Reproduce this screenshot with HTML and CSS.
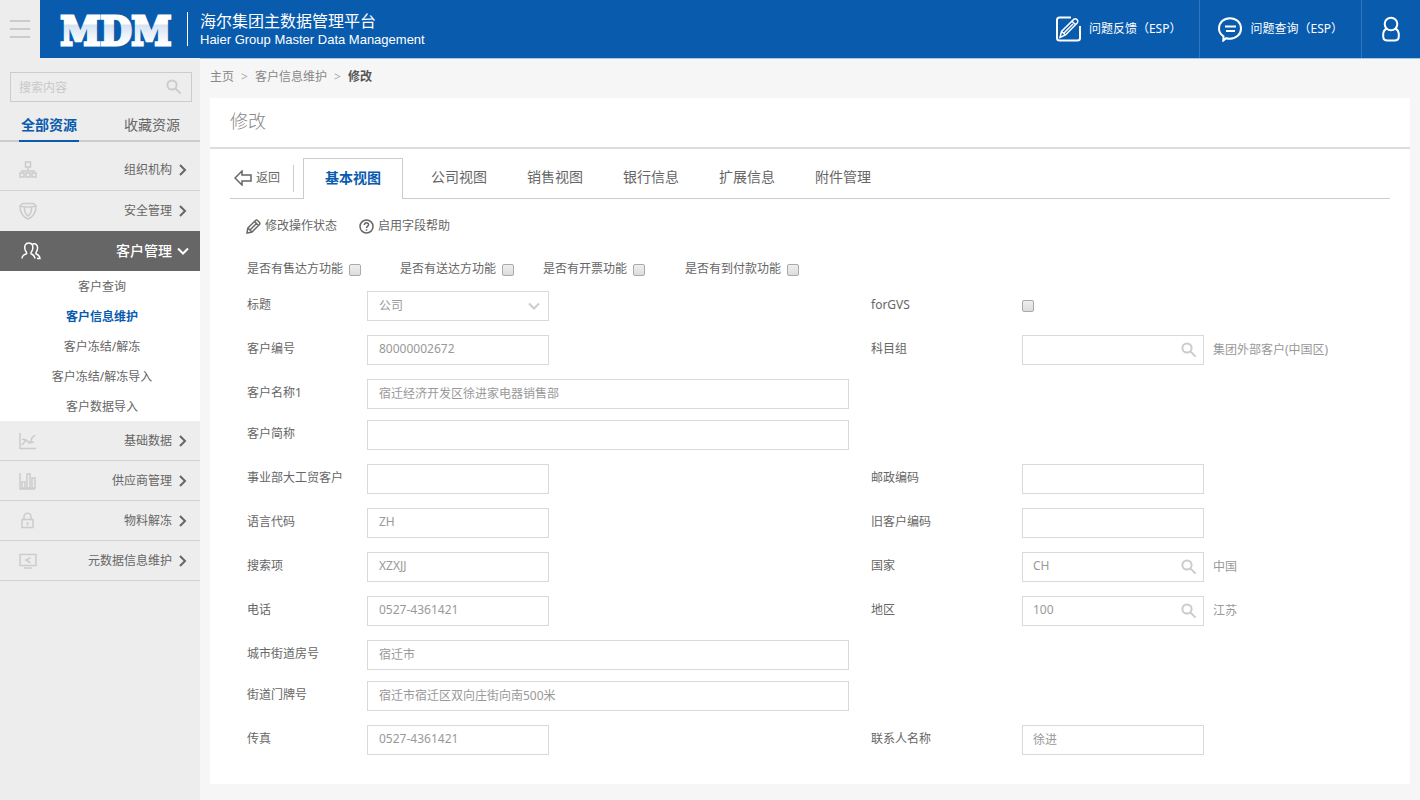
FILE: index.html
```html
<!DOCTYPE html>
<html lang="zh-CN">
<head>
<meta charset="utf-8">
<title>海尔集团主数据管理平台</title>
<link rel="stylesheet" href="styles.css">
</head>
<body>
<svg class="sprite" aria-hidden="true">
  <symbol id="i-search" viewBox="0 0 16 16"><circle cx="6" cy="6" r="4.6"/><path d="M9.6 9.6L14.6 14.6"/></symbol>
  <symbol id="i-right" viewBox="0 0 10 14"><path d="M2 2l5 5-5 5"/></symbol>
  <symbol id="i-down" viewBox="0 0 14 10"><path d="M2 2.500l5 5 5-5"/></symbol>
</svg>
<div class="top">
  <button class="toggle" type="button" aria-label="菜单"><svg width="20" height="20" viewBox="0 0 20 20"><path d="M0 2h20M0 10h20M0 18h20"/></svg></button>
  <header class="header">
    <svg class="logo" width="120" height="56" viewBox="0 0 120 56" role="img" aria-label="MDM">
      <defs><linearGradient id="metal" gradientUnits="userSpaceOnUse" x1="0" y1="10" x2="0" y2="46">
        <stop offset="0" stop-color="#fff"/><stop offset=".37" stop-color="#fff"/><stop offset=".38" stop-color="#d3e2f1"/><stop offset=".9" stop-color="#fff"/><stop offset="1" stop-color="#fff"/>
      </linearGradient></defs>
      <text class="logo-text" x="60" y="44" text-anchor="middle">MDM</text>
    </svg>
    <div class="brand">
      <div class="brand-cn">海尔集团主数据管理平台</div>
      <div class="brand-en">Haier Group Master Data Management</div>
    </div>
    <nav class="links">
      <a class="link" href="#">
        <svg width="26" height="26" viewBox="0 0 26 26"><path d="M16 1.500H4.500Q2 1.500 2 4v18q0 2.500 2.500 2.500h18Q25 24.500 25 22V10"/><path d="M5 21.500l1.500-6L19 3.200q1.500-1 3 .4 1.600 1.600.4 3.200L10.500 19zM6.500 15.500l4 3.500M17 5.200l3.500 3.500M9 17l9-9"/></svg>
        <span>问题反馈（ESP）</span></a>
      <a class="link" href="#">
        <svg width="24" height="26" viewBox="0 0 24 26"><path d="M5.500 20.300C2.700 18.500 1 15.800 1 12.500 1 6.500 5.900 2.200 12 2.200s11 4.300 11 10.300-4.900 10.200-11 10.200c-1.500 0-2.700-.2-3.800-.5L5.300 24.500zM7 10.500h11M8 15h9"/></svg>
        <span>问题查询（ESP）</span></a>
      <a class="user" href="#" aria-label="用户">
        <svg width="18" height="26" viewBox="0 0 18 26"><circle cx="9" cy="8" r="6.300"/><path d="M4.700 12.500C2.200 13.800 1.200 16 1.200 18.500v1.700q0 4.300 4.300 4.300h7q4.300 0 4.300-4.300v-1.700c0-2.500-1-4.700-3.500-6"/></svg>
      </a>
    </nav>
  </header>
</div>
<div class="body">
  <aside class="side">
    <div class="side-search">
      <input type="text" placeholder="搜索内容" aria-label="搜索内容">
      <button class="find" type="button" aria-label="搜索"><svg width="16" height="16"><use href="#i-search"/></svg></button>
    </div>
    <div class="side-tabs">
      <button class="side-tab on" type="button">全部资源</button>
      <button class="side-tab" type="button">收藏资源</button>
    </div>
    <nav>
      <a class="item first" href="#"><svg class="ico" viewBox="0 0 18 18"><path d="M6.500 1h5v5h-5zM9 6v4M3 12v-2h12v2M1 12h4v4H1zM7 12h4v4H7zM13 12h4v4h-4z"/></svg><span>组织机构</span><svg class="arr"><use href="#i-right"/></svg></a>
      <a class="item last" href="#"><svg class="ico" viewBox="0 0 18 18"><path d="M3.500 1.500h11L17 4c0 6-2 10.500-8 13C3 14.500 1 10 1 4zM5.500 5h7c.5 4-1 7-3.500 9-2.500-2-4-5-3.500-9zM1 4l4.500 1M17 4l-4.500 1"/></svg><span>安全管理</span><svg class="arr"><use href="#i-right"/></svg></a>
      <a class="item open" href="#"><svg class="ico people" viewBox="0 0 20 20"><path d="M1 17.500c0-3 1.500-3.800 4.500-4.700C6.300 12 5 10.800 4.200 9 3 5 4.300 2 7.800 2s4.800 3 3.600 7c-.8 1.800-2.100 3-1.300 3.800 1.700 1 3.400 1 3.900 4.700M11.500 3c3.500-1 6 1.500 4.700 6-.6 2-1.700 2.800-1.200 3.800 2 .9 4 1.500 4 4.700h-3"/></svg><span>客户管理</span><svg class="arr-d"><use href="#i-down"/></svg></a>
      <div class="sub">
        <a href="#">客户查询</a>
        <a class="on" href="#">客户信息维护</a>
        <a href="#">客户冻结/解冻</a>
        <a href="#">客户冻结/解冻导入</a>
        <a href="#">客户数据导入</a>
      </div>
      <a class="item" href="#"><svg class="ico" viewBox="0 0 18 18"><path d="M1 1v15.500h16M3 13l4-5 4 3 2-5 3-3M3 7l4 1 3 3 5-1"/></svg><span>基础数据</span><svg class="arr"><use href="#i-right"/></svg></a>
      <a class="item" href="#"><svg class="ico" viewBox="0 0 18 18"><path d="M1 1v16h15M3 10h3v6H3zM8 2h3v14H8zM13 6h3v10h-3z"/></svg><span>供应商管理</span><svg class="arr"><use href="#i-right"/></svg></a>
      <a class="item" href="#"><svg class="ico" viewBox="0 0 18 18"><path d="M3 7.500h11v8H3zM5 7V5c0-5 7-5 7-.5V7M8.500 10.500v3M7.500 11h2"/></svg><span>物料解冻</span><svg class="arr"><use href="#i-right"/></svg></a>
      <a class="item" href="#"><svg class="ico" viewBox="0 0 18 18"><path d="M1 2.500h16v11H1zM5 16h8M11 6L7 8l4 2.500M6.500 7.500v1M11 5.500v1M11 10v1"/></svg><span>元数据信息维护</span><svg class="arr"><use href="#i-right"/></svg></a>
    </nav>
  </aside>
  <main class="main">
    <nav class="crumbs"><a href="#">主页</a><i>&gt;</i><a href="#">客户信息维护</a><i>&gt;</i><b>修改</b></nav>
    <section class="card">
      <h1 class="title">修改</h1>
      <div class="tabs">
        <button class="back" type="button"><svg width="18" height="16" viewBox="0 0 18 16"><path d="M8 1L1 8l7 7v-4h9V5H8z"/></svg>返回</button>
        <button class="tab on" type="button">基本视图</button>
        <button class="tab" type="button">公司视图</button>
        <button class="tab" type="button">销售视图</button>
        <button class="tab" type="button">银行信息</button>
        <button class="tab" type="button">扩展信息</button>
        <button class="tab" type="button">附件管理</button>
      </div>
      <div class="tools">
        <button type="button"><svg width="15" height="15" viewBox="0 0 15 15"><path d="M1 14l.8-5L9.500 1.500q1-.8 2 0l2 2q.8 1 0 2L6 13zM1.800 9L6 13M4 11l7-7M8.500 2.500l4 4"/></svg>修改操作状态</button>
        <button type="button"><svg width="15" height="15" viewBox="0 0 15 15"><circle cx="7.500" cy="7.500" r="6.500"/><path d="M5.300 6c0-3 4.500-2.700 4.300-.2C9.500 7.200 7.500 7.200 7.500 9M7.500 10.300v1.500"/></svg>启用字段帮助</button>
      </div>
      <form class="form">
        <div class="checks">
          <label>是否有售达方功能<input type="checkbox"></label>
          <label>是否有送达方功能<input type="checkbox"></label>
          <label>是否有开票功能<input type="checkbox"></label>
          <label>是否有到付款功能<input type="checkbox"></label>
        </div>
        <div class="row">
          <label for="f1">标题</label>
          <div class="cell"><div class="box"><select id="f1"><option>公司</option></select><svg class="caret"><use href="#i-down"/></svg></div></div>
          <label for="g1">forGVS</label>
          <div class="cell"><input id="g1" type="checkbox"></div>
        </div>
        <div class="row">
          <label for="f2">客户编号</label>
          <div class="cell"><div class="box"><input id="f2" type="text" value="80000002672"></div></div>
          <label for="g2">科目组</label>
          <div class="cell right"><div class="box"><input id="g2" type="text"><button class="find" type="button" aria-label="查找"><svg width="16" height="16"><use href="#i-search"/></svg></button></div><span class="note">集团外部客户(中国区)</span></div>
        </div>
        <div class="row wide">
          <label for="f3">客户名称1</label>
          <div class="cell"><input id="f3" type="text" value="宿迁经济开发区徐进家电器销售部"></div>
        </div>
        <div class="row">
          <label for="f4">客户简称</label>
          <div class="cell long"><input id="f4" type="text"></div>
        </div>
        <div class="row">
          <label for="f5">事业部大工贸客户</label>
          <div class="cell"><div class="box"><input id="f5" type="text"></div></div>
          <label for="g5">邮政编码</label>
          <div class="cell right"><div class="box"><input id="g5" type="text"></div></div>
        </div>
        <div class="row">
          <label for="f6">语言代码</label>
          <div class="cell"><div class="box"><input id="f6" type="text" value="ZH"></div></div>
          <label for="g6">旧客户编码</label>
          <div class="cell right"><div class="box"><input id="g6" type="text"></div></div>
        </div>
        <div class="row">
          <label for="f7">搜索项</label>
          <div class="cell"><div class="box"><input id="f7" type="text" value="XZXJJ"></div></div>
          <label for="g7">国家</label>
          <div class="cell right"><div class="box"><input id="g7" type="text" value="CH"><button class="find" type="button" aria-label="查找"><svg width="16" height="16"><use href="#i-search"/></svg></button></div><span class="note">中国</span></div>
        </div>
        <div class="row">
          <label for="f8">电话</label>
          <div class="cell"><div class="box"><input id="f8" type="text" value="0527-4361421"></div></div>
          <label for="g8">地区</label>
          <div class="cell right"><div class="box"><input id="g8" type="text" value="100"><button class="find" type="button" aria-label="查找"><svg width="16" height="16"><use href="#i-search"/></svg></button></div><span class="note">江苏</span></div>
        </div>
        <div class="row wide">
          <label for="f9">城市街道房号</label>
          <div class="cell"><input id="f9" type="text" value="宿迁市"></div>
        </div>
        <div class="row">
          <label for="f10">街道门牌号</label>
          <div class="cell long"><input id="f10" type="text" value="宿迁市宿迁区双向庄街向南500米"></div>
        </div>
        <div class="row">
          <label for="f11">传真</label>
          <div class="cell"><div class="box"><input id="f11" type="text" value="0527-4361421"></div></div>
          <label for="g11">联系人名称</label>
          <div class="cell right"><div class="box"><input id="g11" type="text" value="徐进"></div></div>
        </div>
      </form>
    </section>
  </main>
</div>
</body>
</html>
```
FILE: styles.css
```css
* { box-sizing: border-box; }
body {
  margin: 0;
  min-height: 100vh;
  display: flex;
  flex-direction: column;
  background: #f6f6f6;
  color: #666;
  font: 12px/20px "Noto Sans", "Noto Sans CJK SC", sans-serif;
}
a { color: inherit; text-decoration: none; }
button, input, select { font: inherit; color: inherit; }
button { border: 0; padding: 0; background: none; cursor: pointer; }
svg { fill: none; stroke: currentColor; flex: none; }
.sprite { position: absolute; width: 0; height: 0; }

.top { display: flex; height: 58px; }
.toggle { width: 40px; background: #ededed; color: #ccc; display: grid; place-items: center; }
.toggle svg { stroke-width: 2; }
.header {
  flex: 1;
  display: flex;
  align-items: center;
  padding-left: 16px;
  background: #095bae;
  color: #fff;
  box-shadow: 0 1px #a9c6e2;
}
.logo { overflow: visible; }
.logo-text {
  font: bold 40px/56px "DejaVu Serif Condensed", "DejaVu Serif", serif;
  fill: url(#metal);
  stroke: url(#metal);
  stroke-width: 3;
}
.brand { margin-left: 11px; padding-left: 12px; border-left: 1px solid #fff; height: 34px; }
.brand-cn { font-size: 16px; line-height: 18px; }
.brand-en { font: 13px/20px "Liberation Sans", Arial, sans-serif; }
.links { margin-left: auto; display: flex; align-self: stretch; }
.link { display: flex; align-items: center; gap: 8px; padding: 0 18px; border-right: 1px solid #2f77c0; }
.links svg { stroke-width: 2; }
.link path + path { stroke-width: 1.5; }
.user { width: 58px; display: grid; place-items: center; }

.body { flex: 1; display: flex; }
.side { width: 200px; flex: none; background: #ededed; padding-top: 14px; }
.side-search { position: relative; margin: 0 8px 0 10px; }
.side-search input {
  display: block;
  width: 100%;
  height: 30px;
  padding: 0 8px;
  border: 1px solid #ccc;
  background: none;
  outline: 0;
}
.side-search input::placeholder { color: #c8c8c8; opacity: 1; }
.find { position: absolute; right: 7px; top: 7px; width: 16px; height: 16px; color: #ccc; }
.find svg { display: block; stroke-width: 2; }
.side-search .find { right: 10px; }
.side-tabs { display: flex; justify-content: space-between; padding: 7px 18px 0 19px; border-bottom: 2px solid #ccc; }
.side-tab { height: 33px; width: 60px; margin-bottom: -2px; font-size: 14px; line-height: 30px; border-bottom: 2px solid transparent; }
.side-tab.on { color: #095bae; font-weight: bold; border-color: #095bae; }
.item { display: flex; align-items: center; height: 40px; padding: 0 12px 0 19px; border-bottom: 1px solid #d2d2d2; }
.item span { flex: 1; text-align: right; padding-right: 6px; }
.item.first { height: 49px; padding-top: 8px; }
.item.last { border: 0; }
.ico { width: 18px; height: 18px; color: #ccc; stroke-width: 1.5; }
.arr { width: 10px; height: 14px; stroke-width: 2; }
.arr-d { width: 14px; height: 10px; stroke-width: 2; }
.item.open { background: #666; color: #fff; border: 0; font-size: 14px; font-weight: 500; padding: 0 10px 0 20px; }
.item.open span { padding-right: 4px; }
.people { width: 22px; height: 20px; color: #fff; stroke-width: 1.5; }
.sub { background: #fff; padding: 1px 0 0 4px; height: 150px; text-align: center; line-height: 30px; }
.sub a { display: block; }
.sub .on { color: #095bae; font-weight: bold; }

.main { flex: 1; min-width: 0; padding: 9px 10px 16px; }
.crumbs { display: flex; color: #888; height: 31px; }
.crumbs i { font-style: normal; color: #aaa; width: 21px; text-align: center; }
.crumbs b { color: #555; }
.card { background: #fff; padding-bottom: 29px; }
.title { margin: 0; height: 51px; padding-left: 20px; font-size: 18px; line-height: 46px; font-weight: 300; color: #888; border-bottom: 2px solid #ddd; }
.tabs { display: flex; margin: 9px 20px 0; height: 41px; border-bottom: 1px solid #ccc; }
.back { display: flex; align-items: center; gap: 4px; align-self: center; height: 27px; width: 64px; margin-right: 9px; padding-left: 4px; border-right: 1px solid #ccc; }
.back svg, .tools svg { stroke-width: 1.5; }
.tab { padding: 0 20px 2px; font-size: 14px; }
.tab.on { height: 41px; padding: 0 21px 3px; margin-right: 8px; border: 1px solid #ccc; border-bottom: 0; background: #fff; color: #095bae; font-weight: bold; }
.tools { display: flex; gap: 22px; margin: 17px 0 0 36px; }
.tools button { display: flex; align-items: center; gap: 4px; }
.form { margin: 23px 20px 0 37px; }
.checks { display: grid; grid-template-columns: 153px 143px 142px auto; margin-bottom: 12px; }
.checks label { display: flex; align-items: center; gap: 6px; }
input[type="checkbox"] {
  appearance: none;
  width: 12px;
  height: 12px;
  margin: 2px 0 0;
  border: 1px solid #aaa;
  border-radius: 2px;
  background: linear-gradient(#eee, #dcdcdc);
}
.row { display: grid; grid-template-columns: 120px minmax(0, 504fr) 151px minmax(0, 368fr); min-height: 30px; margin-bottom: 14px; }
.row.wide { margin-bottom: 11px; }
.row:last-child { margin-bottom: 0; }
.row > label { line-height: 28px; }
.row .cell > input[type="checkbox"] { margin-top: 0; }
.cell { display: flex; align-items: center; }
.wide .cell, .long { padding-right: 22px; }
.box { position: relative; width: 182px; }
.row input[type="text"], .row select {
  display: block;
  width: 100%;
  height: 30px;
  padding: 0 11px 3px;
  border: 1px solid #d9d9d9;
  border-radius: 0;
  background: #fff;
  color: #999;
  outline: 0;
  appearance: none;
}
.row select { padding-bottom: 1px; }
.right input[type="text"] { padding-left: 10px; }
.caret { position: absolute; right: 8px; top: 10px; width: 14px; height: 10px; color: #ccc; stroke-width: 2; pointer-events: none; }
.note { margin-left: 9px; color: #999; }
```
